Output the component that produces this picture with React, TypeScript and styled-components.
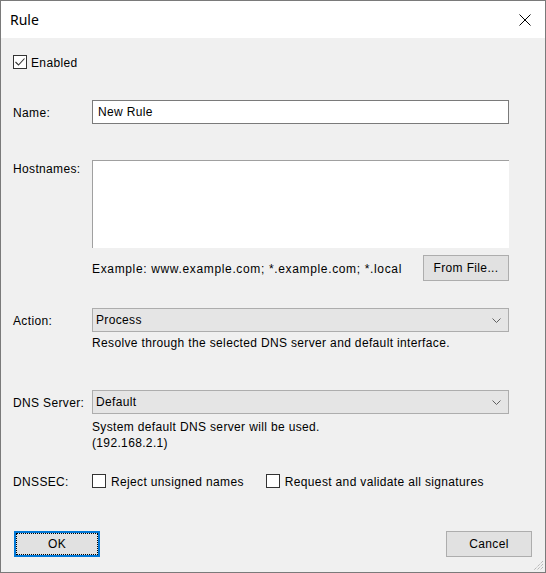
import React from 'react';
import styled, { createGlobalStyle } from 'styled-components';

const GlobalStyle = createGlobalStyle`
  html, body {
    margin: 0;
    padding: 0;
    background: #f0f0f0;
  }
  * {
    box-sizing: border-box;
  }
`;

const Window = styled.div`
  position: relative;
  width: 546px;
  height: 573px;
  border: 1px solid #7a7a7a;
  background: #f0f0f0;
  display: flex;
  flex-direction: column;
  font: 12px / 16px 'Liberation Sans', Arial, sans-serif;
  letter-spacing: 0.35px;
  color: #000;
`;

const TitleBar = styled.div`
  height: 37px;
  flex: none;
  background: #fff;
  display: flex;
  align-items: center;
  justify-content: space-between;
  padding: 0 14px 0 9px;
`;

const Title = styled.span`
  font: 14px 'Noto Sans', 'Open Sans', sans-serif;
  letter-spacing: 0;
  color: #000;
`;

const CloseIcon = styled.svg`
  display: block;
  width: 12px;
  height: 12px;
`;

const Body = styled.div`
  flex: 1;
  display: flex;
  flex-direction: column;
  padding: 0 12px 15px;
`;

const TopCheck = styled.div`
  display: flex;
  height: 14px;
  align-items: center;
  margin-top: 17px;
`;

const CheckLabel = styled.label<{ $gap?: number }>`
  display: inline-flex;
  align-items: center;
  gap: ${(p) => p.$gap ?? 4}px;
  white-space: nowrap;
`;

const CheckText = styled.span`
  padding-top: 2px;
`;

const Box = styled.span`
  width: 14px;
  height: 14px;
  flex: none;
  background: #fff;
  border: 1px solid #333;
  display: flex;
  align-items: center;
  justify-content: center;
`;

const Row = styled.div<{ $top: number; $align?: string }>`
  display: grid;
  grid-template-columns: 79px 417px;
  align-items: ${(p) => p.$align ?? 'center'};
  margin-top: ${(p) => p.$top}px;
`;

const Label = styled.span<{ $pad?: number }>`
  white-space: nowrap;
  padding-top: ${(p) => p.$pad ?? 2}px;
`;

const TextInput = styled.div`
  height: 24px;
  background: #fff;
  border: 1px solid #7a7a7a;
  padding: 0 5px;
  display: flex;
  align-items: center;
`;

const TextArea = styled.div`
  height: 88px;
  background: #fff;
  border-top: 1px solid #a0a0a0;
  border-left: 1px solid #a0a0a0;
`;

const Hint = styled.div`
  grid-column: 2;
`;

const ExampleLine = styled.div`
  grid-column: 2;
  display: flex;
  align-items: center;
  justify-content: space-between;
`;

const ExampleText = styled.span`
  letter-spacing: 0.65px;
  padding-top: 2px;
`;

const Select = styled.div`
  height: 24px;
  background: #e5e5e5;
  border: 1px solid #adadad;
  padding: 0 7px 0 3px;
  display: flex;
  align-items: center;
  justify-content: space-between;
`;

const Chevron = styled.svg`
  display: block;
  width: 9px;
  height: 5px;
`;

const Button = styled.div<{ $default?: boolean }>`
  position: relative;
  width: 86px;
  height: 26px;
  background: #e1e1e1;
  border: ${(p) => (p.$default ? '2px solid #0078d7' : '1px solid #adadad')};
  display: flex;
  align-items: center;
  justify-content: center;

  ${(p) =>
    p.$default &&
    `
    &::after {
      content: '';
      position: absolute;
      inset: 0;
      border: 1px dotted #000;
    }
  `}
`;

const Checks = styled.div`
  display: flex;
  align-items: center;
  gap: 22px;
`;

const Footer = styled.div`
  margin: auto 1px 0;
  display: flex;
  justify-content: space-between;
`;

const Grip = styled.svg`
  position: absolute;
  right: 1px;
  bottom: 1px;
  width: 12px;
  height: 12px;
`;

const Check: React.FC<{ checked?: boolean; children: React.ReactNode }> = ({ checked, children }) => (
  <CheckLabel $gap={checked ? 4 : 5}>
    <Box>
      {checked && (
        <svg width="12" height="12" viewBox="0 0 12 12">
          <polyline points="1.5,6 4.5,9 10.5,2.5" fill="none" stroke="#333" strokeWidth="1.1" />
        </svg>
      )}
    </Box>
    <CheckText>{children}</CheckText>
  </CheckLabel>
);

const Dropdown: React.FC<{ value: string }> = ({ value }) => (
  <Select>
    <span>{value}</span>
    <Chevron viewBox="0 0 9 5">
      <polyline points="0.5,0.5 4.5,4.5 8.5,0.5" fill="none" stroke="#606060" strokeWidth="1" />
    </Chevron>
  </Select>
);

export default function App() {
  return (
    <>
      <GlobalStyle />
      <Window>
        <TitleBar>
          <Title>Rule</Title>
          <CloseIcon viewBox="0 0 12 12">
            <line x1="0.5" y1="0.5" x2="11.5" y2="11.5" stroke="#000" strokeWidth="1" />
            <line x1="11.5" y1="0.5" x2="0.5" y2="11.5" stroke="#000" strokeWidth="1" />
          </CloseIcon>
        </TitleBar>
        <Body>
          <TopCheck>
            <Check checked>Enabled</Check>
          </TopCheck>

          <Row $top={31}>
            <Label>Name:</Label>
            <TextInput>New Rule</TextInput>
          </Row>

          <Row $top={36} $align="start">
            <Label $pad={1}>Hostnames:</Label>
            <TextArea />
          </Row>

          <Row $top={7}>
            <ExampleLine>
              <ExampleText>Example: www.example.com; *.example.com; *.local</ExampleText>
              <Button>From File...</Button>
            </ExampleLine>
          </Row>

          <Row $top={27}>
            <Label>Action:</Label>
            <Dropdown value="Process" />
          </Row>
          <Row $top={3}>
            <Hint>Resolve through the selected DNS server and default interface.</Hint>
          </Row>

          <Row $top={39}>
            <Label>DNS Server:</Label>
            <Dropdown value="Default" />
          </Row>
          <Row $top={5}>
            <Hint>
              System default DNS server will be used.
              <br />
              (192.168.2.1)
            </Hint>
          </Row>

          <Row $top={21}>
            <Label>DNSSEC:</Label>
            <Checks>
              <Check>Reject unsigned names</Check>
              <Check>Request and validate all signatures</Check>
            </Checks>
          </Row>

          <Footer>
            <Button $default>OK</Button>
            <Button>Cancel</Button>
          </Footer>
        </Body>
        <Grip viewBox="0 0 12 12">
          <line x1="11" y1="2" x2="2" y2="11" stroke="#a0a0a0" strokeDasharray="1 1" />
          <line x1="11" y1="5" x2="5" y2="11" stroke="#a0a0a0" strokeDasharray="1 1" />
          <line x1="11" y1="8" x2="8" y2="11" stroke="#a0a0a0" strokeDasharray="1 1" />
        </Grip>
      </Window>
    </>
  );
}
